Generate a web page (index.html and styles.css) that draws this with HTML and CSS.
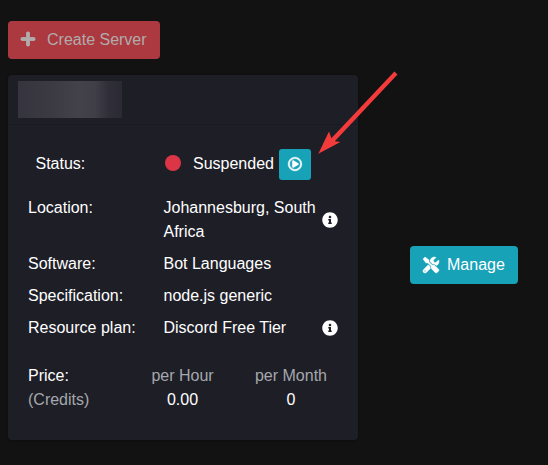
FILE: index.html
```html
<!DOCTYPE html>
<html lang="en">
<head>
<meta charset="utf-8">
<title>Servers</title>
<link rel="stylesheet" href="styles.css">
</head>
<body>
<button class="btn btn-create"><svg class="icon" viewBox="0 0 448 512"><path d="M416 208H272V64c0-17.67-14.33-32-32-32h-32c-17.67 0-32 14.33-32 32v144H32c-17.67 0-32 14.33-32 32v32c0 17.67 14.33 32 32 32h144v144c0 17.67 14.33 32 32 32h32c17.67 0 32-14.33 32-32V304h144c17.67 0 32-14.33 32-32v-32c0-17.67-14.33-32-32-32z"/></svg>Create Server</button>
<main class="layout">
  <section class="card">
    <header class="card-header"><div class="hidden-name"></div></header>
    <div class="card-body">
      <div class="row status">
        <span class="label">Status:</span>
        <span class="dot"></span>
        <span class="state">Suspended</span>
        <button class="btn-play" aria-label="Resume"><svg viewBox="0 0 512 512"><path d="M371.7 238l-176-107c-15.8-8.8-35.7 2.5-35.7 21v208c0 18.4 19.8 29.8 35.7 21l176-101c16.4-9.1 16.4-32.8 0-42zM504 256C504 119 393 8 256 8S8 119 8 256s111 248 248 248 248-111 248-248zm-448 0c0-110.5 89.5-200 200-200s200 89.5 200 200-89.5 200-200 200S56 366.5 56 256z"/></svg></button>
      </div>
      <div class="row">
        <span class="label">Location:</span><span class="value">Johannesburg, South Africa</span>
        <svg class="info" viewBox="0 0 512 512"><path d="M256 8C119.043 8 8 119.083 8 256c0 136.997 111.043 248 248 248s248-111.003 248-248C504 119.083 392.957 8 256 8zm0 110c23.196 0 42 18.804 42 42s-18.804 42-42 42-42-18.804-42-42 18.804-42 42-42zm56 254c0 6.627-5.373 12-12 12h-88c-6.627 0-12-5.373-12-12v-24c0-6.627 5.373-12 12-12h12v-64h-12c-6.627 0-12-5.373-12-12v-24c0-6.627 5.373-12 12-12h64c6.627 0 12 5.373 12 12v100h12c6.627 0 12 5.373 12 12v24z"/></svg>
      </div>
      <div class="row"><span class="label">Software:</span><span class="value">Bot Languages</span></div>
      <div class="row"><span class="label">Specification:</span><span class="value">node.js generic</span></div>
      <div class="row">
        <span class="label">Resource plan:</span><span class="value">Discord Free Tier</span>
        <svg class="info" viewBox="0 0 512 512"><path d="M256 8C119.043 8 8 119.083 8 256c0 136.997 111.043 248 248 248s248-111.003 248-248C504 119.083 392.957 8 256 8zm0 110c23.196 0 42 18.804 42 42s-18.804 42-42 42-42-18.804-42-42 18.804-42 42-42zm56 254c0 6.627-5.373 12-12 12h-88c-6.627 0-12-5.373-12-12v-24c0-6.627 5.373-12 12-12h12v-64h-12c-6.627 0-12-5.373-12-12v-24c0-6.627 5.373-12 12-12h64c6.627 0 12 5.373 12 12v100h12c6.627 0 12 5.373 12 12v24z"/></svg>
      </div>
      <div class="price">
        <div>Price:<br><span class="muted">(Credits)</span></div>
        <div class="cost"><span class="muted">per Hour</span><br>0.00</div>
        <div class="cost"><span class="muted">per Month</span><br>0</div>
      </div>
    </div>
  </section>
  <button class="btn btn-manage"><svg class="icon" viewBox="0 0 512 512"><path d="M501.1 395.7L384 278.6c-23.1-23.1-57.6-27.6-85.4-13.9L192 158.1V96L64 0 0 64l96 128h62.1l106.6 106.6c-13.6 27.8-9.2 62.3 13.9 85.4l117.1 117.1c14.6 14.6 38.2 14.6 52.7 0l52.7-52.7c14.5-14.6 14.5-38.2 0-52.7zM331.7 225c28.3 0 54.9 11 74.9 31l19.4 19.4c15.8-6.9 30.8-16.5 43.8-29.5 37.1-37.1 49.7-89.3 37.9-136.7-2.2-9-13.5-12.1-20.1-5.5l-74.4 74.4-67.9-11.3L334 98.9l74.4-74.4c6.6-6.6 3.4-17.9-5.7-20.2-47.4-11.7-99.6.9-136.6 37.9-28.5 28.5-41.9 66.1-41.2 103.6l82.1 82.1c8.1-1.9 16.5-2.9 24.7-2.9zm-103.9 82l-56.7-56.7L18.7 402.8c-25 25-25 65.5 0 90.5s65.5 25 90.5 0l123.6-123.6c-7.6-19.9-9.9-41.6-5-62.7zM64 472c-13.2 0-24-10.8-24-24 0-13.3 10.7-24 24-24s24 10.7 24 24c0 13.2-10.7 24-24 24z"/></svg>Manage</button>
</main>
<svg class="arrow" viewBox="0 0 82 84"><path d="M76.4 .6L79.5 3.5L16.8 70.2L22.4 71L.3 82.7L11 60.6L13.4 67.2Z"/></svg>
</body>
</html>
```

FILE: styles.css
```css
* { box-sizing: border-box; }

body {
  margin: 0;
  padding: 21px 0 0 8px;
  height: 465px;
  overflow: hidden;
  background: #121212;
  color: #fff;
  font: 16px/24px "Liberation Sans", Arial, sans-serif;
}

svg { display: block; fill: currentColor; overflow: visible; }

button { border: 0; font: inherit; color: #fff; background: #17a2b8; border-radius: 4px; }

.btn { display: flex; align-items: center; height: 38px; padding: 0 13px; white-space: nowrap; }
.btn-create { width: 152px; background: #ac393f; color: #b1abac; }
.btn-create .icon { width: 14px; height: 16px; margin: -2px 12px 0 0; stroke: currentColor; stroke-width: 28; }

.layout { display: flex; align-items: center; gap: 52px; margin-top: 16px; }

.card {
  width: 350px;
  height: 365px;
  border-radius: 4px;
  background: #1e1e27;
  box-shadow: 0 0 1px rgba(0, 0, 0, .15), 0 1px 3px rgba(0, 0, 0, .2);
}
.card-header { height: 50px; padding: 6px 10px; border-bottom: 1px solid #1a1a22; }
.hidden-name {
  width: 104px;
  height: 37px;
  background: linear-gradient(90deg, #36353f, #3b3a43 30%, #43424b 58%, #403f48 74%, #302f39 87%, #2b2a34);
}

.card-body { padding: 20px; }
.row { display: grid; grid-template-columns: 135.5px 158px 16px; align-items: start; margin-bottom: 8px; }
.info { width: 16px; height: 16px; align-self: center; }

.status { display: flex; align-items: center; height: 32px; margin: 3px 0 16px; padding-left: 7.5px; }
.status .label { width: 129.5px; }
.dot { width: 16px; height: 16px; margin: -3px 12px 0 0; border-radius: 50%; background: #dc3545; }
.state { width: 86px; }
.btn-play { display: grid; place-items: center; width: 32px; height: 31px; padding: 0; border-radius: 3px; }
.btn-play svg { width: 14px; height: 14px; stroke: currentColor; stroke-width: 20; }

.price { display: grid; grid-template-columns: 103px 103px 114px; margin-top: 24px; }
.cost { text-align: center; }
.muted { color: #a5a8ac; }

.btn-manage { width: 108px; margin-top: 15px; }
.btn-manage .icon { width: 16px; height: 16px; margin-right: 8px; stroke: currentColor; stroke-width: 14; }

.arrow { position: absolute; left: 318px; top: 71px; width: 82px; height: 84px; fill: #f43b3b; }
```
